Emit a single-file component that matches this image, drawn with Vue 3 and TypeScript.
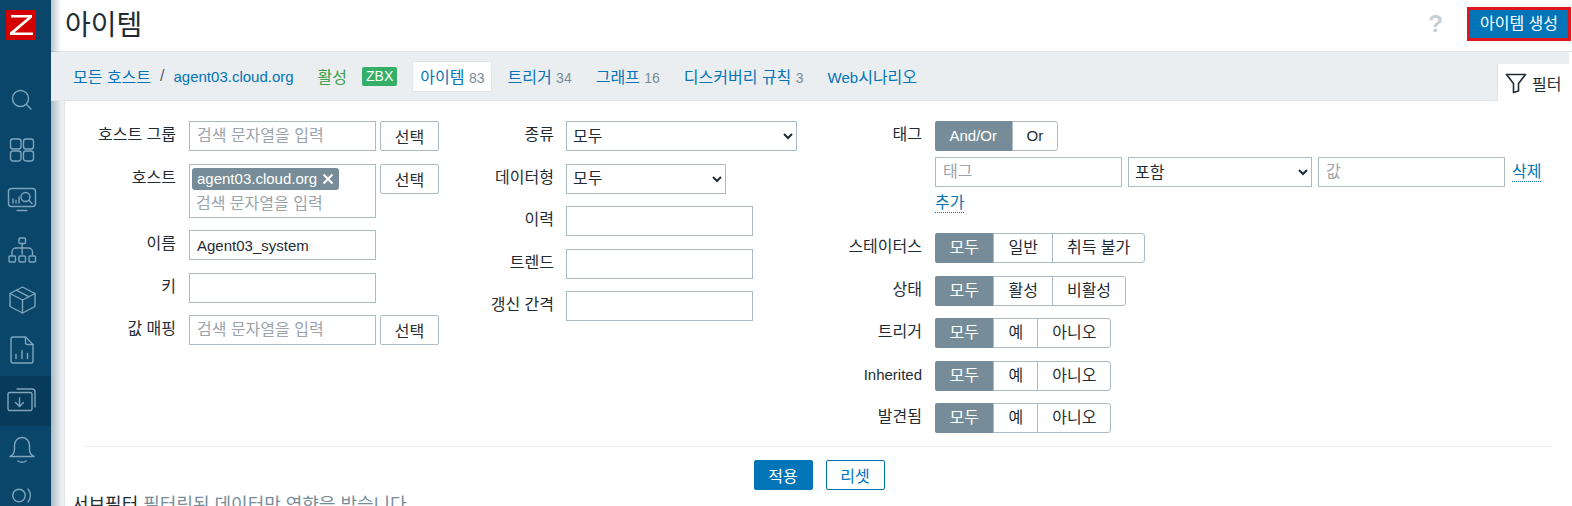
<template>
  <div class="app">
    <aside class="sidebar">
      <div class="logo"><span class="logo-box">
        <svg width="30" height="30" viewBox="0 0 30 30"><path d="M5 5h21v2.500L8.500 22.500H27V25H4v-2.500L22 7.500H5z" fill="#fff" /></svg>
      </span></div>
      <div v-for="(icon, i) in menuIcons" :key="i" class="menu-item" :class="{ active: i === 6 }">
        <svg width="30" height="30" viewBox="0 0 30 30" fill="none" stroke="#7ea5bc" stroke-width="1.4" stroke-linecap="round" stroke-linejoin="round">
          <path v-for="(d, n) in icon" :key="n" :d="d" />
        </svg>
      </div>
    </aside>

    <main class="main">
      <header class="page-header">
        <h1>아이템</h1>
        <div class="header-actions">
          <span class="help">?</span>
          <button class="create-btn">아이템 생성</button>
        </div>
      </header>

      <nav class="host-nav">
        <a class="link">모든 호스트</a>
        <span class="slash">/</span>
        <a class="link en">agent03.cloud.org</a>
        <span class="status-on">활성</span>
        <span class="zbx">ZBX</span>
        <a class="nav-tab selected">아이템 <small>83</small></a>
        <a class="nav-tab">트리거 <small>34</small></a>
        <a class="nav-tab">그래프 <small>16</small></a>
        <a class="nav-tab">디스커버리 규칙 <small>3</small></a>
        <a class="nav-tab"><span class="en">Web</span>시나리오</a>
        <div class="filter-tab">
          <svg width="22" height="22" viewBox="0 0 22 22" fill="none" stroke="#1f2c33" stroke-width="1.6" stroke-linejoin="round"><path d="M1.500 2.500h19l-7 9v7.500l-5 1.500v-9z" /></svg>
          <span>필터</span>
        </div>
      </nav>

      <section class="panel">
        <div class="columns">
          <div class="col col-1">
            <div class="row"><label>호스트 그룹</label><input class="field w187" placeholder="검색 문자열을 입력" /><button class="select-btn">선택</button></div>
            <div class="row">
              <label>호스트</label>
              <div class="multi">
                <span class="chip"><span class="en">agent03.cloud.org</span>
                  <svg width="12" height="12" viewBox="0 0 12 12" stroke="#fff" stroke-width="2"><path d="M1.500 1.500l9 9M10.500 1.500l-9 9" /></svg>
                </span>
                <span class="ph">검색 문자열을 입력</span>
              </div>
              <button class="select-btn">선택</button>
            </div>
            <div class="row"><label>이름</label><input class="field w187 en" value="Agent03_system" /></div>
            <div class="row"><label>키</label><input class="field w187" /></div>
            <div class="row"><label>값 매핑</label><input class="field w187" placeholder="검색 문자열을 입력" /><button class="select-btn">선택</button></div>
          </div>

          <div class="col col-2">
            <div class="row"><label>종류</label><select class="field w231"><option>모두</option></select></div>
            <div class="row"><label>데이터형</label><select class="field w160"><option>모두</option></select></div>
            <div class="row"><label>이력</label><input class="field w187" /></div>
            <div class="row"><label>트렌드</label><input class="field w187" /></div>
            <div class="row"><label>갱신 간격</label><input class="field w187" /></div>
          </div>

          <div class="col col-3">
            <div class="tag-block">
              <label>태그</label>
              <div class="tag-body">
                <div class="radio"><span class="on en">And/Or</span><span class="en">Or</span></div>
                <div class="tag-row">
                  <input class="field w187" placeholder="태그" />
                  <select class="field w184"><option>포함</option></select>
                  <input class="field w187" placeholder="값" />
                  <a class="dotted">삭제</a>
                </div>
                <a class="dotted add">추가</a>
              </div>
            </div>
            <div v-for="g in radioGroups" :key="g.label" class="row">
              <label :class="{ en: g.label === 'Inherited' }">{{ g.label }}</label>
              <div class="radio">
                <span v-for="(o, i) in g.options" :key="o" :class="{ on: i === 0 }">{{ o }}</span>
              </div>
            </div>
          </div>
        </div>

        <div class="actions">
          <button class="apply">적용</button>
          <button class="reset">리셋</button>
        </div>

        <p class="subfilter"><b>서브필터</b> <span>필터링된 데이터만 영향을 받습니다</span></p>
      </section>
    </main>
  </div>
</template>

<script setup lang="ts">
// rounded rect as a path, the menu icons are all plain path lists
function rr(x: number, y: number, w: number, h: number, r: number) {
  return `M${x + r} ${y}h${w - 2 * r}a${r} ${r} 0 0 1 ${r} ${r}v${h - 2 * r}a${r} ${r} 0 0 1 -${r} ${r}h-${w - 2 * r}a${r} ${r} 0 0 1 -${r} -${r}v-${h - 2 * r}a${r} ${r} 0 0 1 ${r} -${r}z`
}

function circle(cx: number, cy: number, r: number) {
  return `M${cx - r} ${cy}a${r} ${r} 0 1 0 ${2 * r} 0a${r} ${r} 0 1 0 -${2 * r} 0z`
}

const menuIcons: string[][] = [
  [circle(13.5, 13.5, 8), "M19.500 19.500l4.500 4.500"],
  [rr(3.5, 4, 10.5, 10, 2.5), rr(16.5, 4, 10, 10, 2.5), rr(3.5, 16, 10.5, 10, 2.5), rr(16.5, 16, 10, 10, 2.5)],
  [rr(1.5, 3.5, 27, 18, 3), "M10 25.500h10", "M6 18v-4M9 18v-2.500M12 18v-6", circle(18.5, 12, 4.5), "M22 15.500l3 3"],
  [rr(12, 3, 6.5, 5.5, 1), "M15.200 8.500V19", "M5 20v-3a4 4 0 0 1 4-4h12.500a4 4 0 0 1 4 4v3", rr(2, 21, 6.5, 6, 1), rr(12, 21, 6.5, 6, 1), rr(22, 21, 6.5, 6, 1)],
  ["M15.500 2l12.500 6.500v13L15.500 28L3 21.500v-13z", "M3 8.500l12.500 6.500l12.500-6.500", "M15.500 15v13", "M9.200 5.200l12.500 6.500"],
  ["M6 2h12.500L26 9.500V26a2 2 0 0 1-2 2H6a2 2 0 0 1-2-2V4a2 2 0 0 1 2-2z", "M18.500 2v5.500a2 2 0 0 0 2 2H26", "M9 23.500v-4M15 23.500v-8M20.500 23.500v-5"],
  [rr(1, 7.5, 24, 18, 1.5), "M10 4h15a3 3 0 0 1 3 3v15", "M12.500 13v8.500", "M8.500 17.500l4 4l4-4"],
  ["M15 2.500a7.500 7.500 0 0 0-7.500 7.500v4.500c0 3-1.500 5.500-4.500 7h24c-3-1.500-4.500-4-4.500-7V10A7.500 7.500 0 0 0 15 2.500z", "M11 26c2.300 1.500 5.700 1.500 8 0"],
  [circle(12, 10.5, 6.2), "M21 4c3 4 3 9 0 13"],
]

const radioGroups = [
  { label: "스테이터스", options: ["모두", "일반", "취득 불가"] },
  { label: "상태", options: ["모두", "활성", "비활성"] },
  { label: "트리거", options: ["모두", "예", "아니오"] },
  { label: "Inherited", options: ["모두", "예", "아니오"] },
  { label: "발견됨", options: ["모두", "예", "아니오"] },
]
</script>

<style>
html, body {
  margin: 0;
  height: 100%;
  overflow: hidden;
  background: #fff;
}
</style>

<style scoped>
.app {
  display: flex;
  height: 506px;
  overflow: hidden;
  font-family: "Liberation Sans", "Noto Sans CJK KR", sans-serif;
  font-size: 16px;
  color: #1f2c33;
}
.en {
  font-size: 15px;
}
.sidebar {
  flex: 0 0 51px;
  background: #0a466a;
  overflow: hidden;
}
.logo {
  height: 76px;
  padding: 10px 0 0 6px;
  box-sizing: border-box;
}
.logo-box {
  display: block;
  width: 30px;
  height: 30px;
  background: #d40000;
}
.menu-item {
  height: 50px;
  box-sizing: border-box;
  padding: 0 7px 3px 0;
  display: flex;
  align-items: center;
  justify-content: center;
}
.menu-item:first-of-type {
  margin-bottom: 4px;
}
.menu-item.active {
  background: #083a59;
}
.main {
  flex: 1;
  min-width: 0;
  position: relative;
  padding-right: 3px;
  background: #fff;
}
/* sidebar shadow falling on the page */
.main::before {
  content: "";
  position: absolute;
  left: 0;
  top: 0;
  bottom: 0;
  width: 10px;
  background: linear-gradient(to right, rgba(10, 50, 80, 0.28), rgba(10, 50, 80, 0));
  pointer-events: none;
}
.page-header {
  height: 51px;
  margin-right: -3px;
  padding: 0 1px 0 14px;
  box-sizing: content-box;
  display: flex;
  align-items: center;
  justify-content: space-between;
  border-bottom: 1px solid #dfe4e7;
}
h1 {
  margin: 1px 0 0;
  font-size: 28px;
  font-weight: 400;
  line-height: 40px;
}
.header-actions {
  display: flex;
  align-items: center;
  gap: 24px;
  margin-bottom: 4px;
}
.help {
  font-size: 24px;
  font-weight: 700;
  color: #c5cfd5;
}
.create-btn {
  width: 104px;
  height: 34px;
  background: #0275b8;
  color: #fff;
  border: 3px solid #e0141c;
  font: inherit;
  padding: 0 0 4px;
}
.host-nav {
  height: 49px;
  display: flex;
  align-items: center;
  padding-left: 22px;
  background: #ebeef0;
  border-bottom: 1px solid #dfe4e7;
  box-sizing: border-box;
  position: relative;
}
.link, .nav-tab {
  color: #0275b8;
}
.slash {
  margin: 0 9px;
  color: #4f5f6a;
}
.status-on {
  margin-left: 24px;
  color: #3b9d4a;
}
.zbx {
  margin-left: 15px;
  background: #34af67;
  color: #fff;
  font-size: 14px;
  line-height: 19px;
  padding: 0 4px;
  border-radius: 2px;
}
.nav-tab {
  margin-left: 24px;
}
.nav-tab small {
  font-size: 14px;
  color: #768d99;
}
.nav-tab.selected {
  margin-left: 15px;
  background: #fff;
  padding: 2px 7px 3px;
  border: 1px solid #dfe4e7;
  border-radius: 2px;
}
.nav-tab.selected + .nav-tab {
  margin-left: 15px;
}
.filter-tab {
  position: absolute;
  right: 0;
  bottom: -1px;
  width: 72px;
  height: 37px;
  background: #fff;
  border-left: 1px solid #dfe4e7;
  display: flex;
  align-items: center;
  gap: 5px;
  padding-left: 7px;
  box-sizing: border-box;
}
.panel {
  height: 405px;
  padding-left: 14px;
  background-image: linear-gradient(to right, #ebeef0 13px, #dfe4e7 13px, #dfe4e7 14px, #fff 14px);
  box-sizing: border-box;
  overflow: hidden;
}
.columns {
  display: flex;
  padding-top: 20px;
  height: 346px;
  margin: 0 16px 0 19px;
  border-bottom: 1px solid #ebeef0;
  box-sizing: border-box;
}
.col {
  display: flex;
  flex-direction: column;
  gap: 12.5px;
}
.col-1 {
  width: 370px;
}
.col-2 {
  width: 384px;
}
.row {
  display: flex;
  align-items: flex-start;
}
label {
  flex: 0 0 auto;
  text-align: right;
  padding-top: 3px;
  line-height: 22px;
  white-space: nowrap;
}
.col-1 label {
  width: 92px;
  margin-right: 13px;
}
.col-2 label {
  width: 100px;
  margin-right: 12px;
}
.col-3 label {
  width: 84px;
  margin-right: 13px;
}
.field {
  height: 30px;
  box-sizing: border-box;
  border: 1px solid #acbbc4;
  background: #fff;
  font: inherit;
  color: #1f2c33;
  padding: 0 7px;
  border-radius: 0;
  outline: none;
  line-height: 28px;
}
.field.en {
  font-size: 15px;
}
.field::placeholder {
  color: #9aa4aa;
  opacity: 1;
}
.w187 { width: 187px; }
.w184 { width: 184px; }
.w231 { width: 231px; }
.w160 { width: 160px; }
select.field {
  padding: 0 2px;
}
.select-btn {
  margin-left: 4px;
  width: 59px;
  height: 30px;
  border: 1px solid #acbbc4;
  background: #fff;
  border-radius: 2px;
  font: inherit;
  color: #1f2c33;
}
.multi {
  width: 187px;
  height: 54px;
  box-sizing: border-box;
  border: 1px solid #acbbc4;
  padding: 3px 2px;
  display: flex;
  flex-direction: column;
  align-items: flex-start;
  gap: 3px;
}
.chip {
  background: #768d99;
  color: #fff;
  border-radius: 3px;
  line-height: 22px;
  height: 22px;
  padding: 0 5px;
  display: flex;
  align-items: center;
  gap: 5px;
}
.ph {
  color: #9aa4aa;
  padding-left: 4px;
  line-height: 22px;
}
.tag-block {
  display: flex;
  align-items: flex-start;
  height: 99.5px;
}
.tag-body {
  display: flex;
  flex-direction: column;
  align-items: flex-start;
}
.tag-row {
  display: flex;
  align-items: center;
  gap: 6px;
  margin-top: 6px;
}
.dotted {
  color: #0275b8;
  border-bottom: 1px dotted #0275b8;
  line-height: 19px;
}
.tag-row .dotted {
  margin-left: 1px;
}
.add {
  margin-top: 6px;
}
.radio {
  display: flex;
  height: 30px;
  box-sizing: border-box;
  border: 1px solid #acbbc4;
  border-radius: 3px;
}
.radio span {
  padding: 0 14px;
  line-height: 27px;
  border-left: 1px solid #acbbc4;
  white-space: nowrap;
}
.radio span:first-child {
  border-left: 0;
}
.radio span.on {
  background: #768d99;
  color: #fff;
  margin: -1px 0 -1px -1px;
  padding: 1px 14.5px;
  border-radius: 2px 0 0 2px;
}
.actions {
  display: flex;
  justify-content: center;
  gap: 13px;
  padding: 13px 0 0 4px;
}
.actions button {
  width: 59px;
  height: 30px;
  border-radius: 2px;
  font: inherit;
}
.apply {
  background: #0275b8;
  color: #fff;
  border: 1px solid #0275b8;
}
.reset {
  background: #fff;
  color: #0275b8;
  border: 1px solid #0275b8;
}
.subfilter {
  margin: 3px 0 0 7px;
  font-size: 18px;
  line-height: 24px;
  white-space: nowrap;
}
.subfilter b {
  font-weight: 400;
}
.subfilter span {
  color: #768d99;
}
</style>
